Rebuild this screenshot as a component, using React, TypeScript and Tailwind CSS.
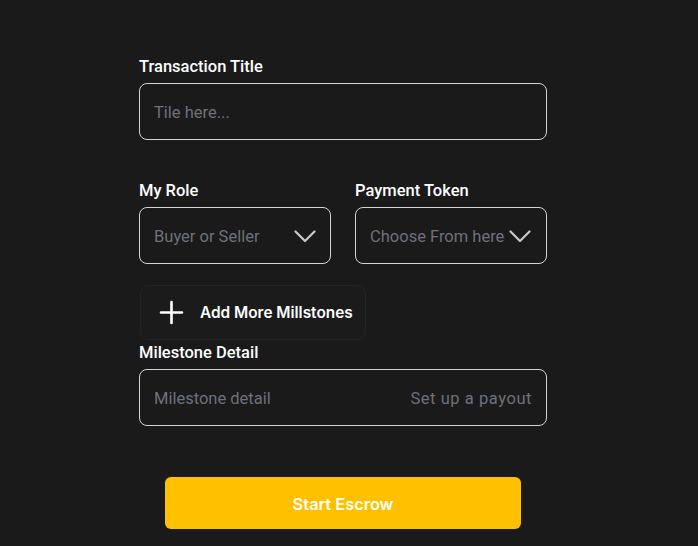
import React from "react";

function Chevron() {
  return (
    <svg width="22" height="13" viewBox="0 0 22 13" fill="none">
      <path d="M1.5 1.5L11 11L20.5 1.5" stroke="#c9cad0" strokeWidth="2.2" strokeLinecap="round" strokeLinejoin="round" />
    </svg>
  );
}

const inter = { fontFamily: "Inter, 'Liberation Sans', sans-serif" };

export default function App() {
  return (
    <div className="min-h-[546px] w-full bg-[#1a1a1a] text-white" style={{ fontFamily: "Roboto, 'Liberation Sans', sans-serif" }}>
      <div className="pl-[139px] pt-[55px] w-[547px] box-content flex flex-col">
        <div className="text-[16.5px] leading-6 font-medium">Transaction Title</div>
        <div className="mt-[4px] h-[57px] w-[408px] rounded-lg border border-[#d4d4d8] flex items-center px-[14px] pt-[3px] text-[16.5px] text-[#6e717c]">
          Tile here...
        </div>

        <div className="mt-[39px] flex gap-6">
          <div className="flex flex-col w-[192px]">
            <div className="text-[16.5px] leading-6 font-medium">My Role</div>
            <div className="mt-[4px] h-[57px] rounded-lg border border-[#d4d4d8] flex items-center justify-between pl-[14px] pr-[14px] pt-[2px] text-[16.5px] text-[#6e717c]">
              <span className="pt-[1px]">Buyer or Seller</span>
              <Chevron />
            </div>
          </div>
          <div className="flex flex-col w-[192px]">
            <div className="text-[16.5px] leading-6 font-medium">Payment Token</div>
            <div className="mt-[4px] h-[57px] rounded-lg border border-[#d4d4d8] flex items-center justify-between pl-[14px] pr-[15px] pt-[2px] text-[16.5px] text-[#6e717c]">
              <span className="whitespace-nowrap pt-[1px]">Choose From here</span>
              <Chevron />
            </div>
          </div>
        </div>

        <div className="mt-[21px] ml-[1px] h-[55px] w-[226px] rounded-lg border border-[#242424] bg-[#1b1b1b] flex items-center pl-[18px] gap-[16px]">
          <svg width="25" height="25" viewBox="0 0 25 25" fill="none">
            <path d="M12.5 2V23M2 12.5H23" stroke="white" strokeWidth="2.6" strokeLinecap="round" />
          </svg>
          <span className="text-[15.4px] font-semibold whitespace-nowrap pt-[1px]" style={inter}>Add More Millstones</span>
        </div>

        <div className="text-[16.5px] leading-6 font-medium pt-[1px]">Milestone Detail</div>
        <div className="mt-[4px] h-[57px] w-[408px] rounded-lg border border-[#d4d4d8] flex items-center justify-between px-[14px] pt-[3px] text-[16.5px] text-[#6e717c]">
          <span>Milestone detail</span>
          <span className="tracking-[0.55px]">Set up a payout</span>
        </div>

        <div className="mt-[51px] ml-[26px] h-[52px] w-[356px] rounded-md bg-[#ffc000] flex items-center justify-center text-[16.4px] font-semibold text-white pt-[2px]" style={inter}>
          Start Escrow
        </div>
      </div>
    </div>
  );
}
